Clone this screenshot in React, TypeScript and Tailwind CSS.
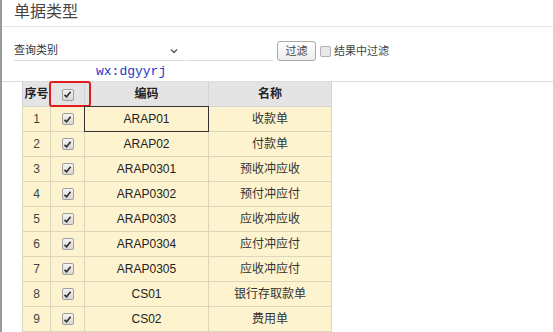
import React from 'react';

const rows = [
  { no: 1, code: 'ARAP01', name: '收款单' },
  { no: 2, code: 'ARAP02', name: '付款单' },
  { no: 3, code: 'ARAP0301', name: '预收冲应收' },
  { no: 4, code: 'ARAP0302', name: '预付冲应付' },
  { no: 5, code: 'ARAP0303', name: '应收冲应收' },
  { no: 6, code: 'ARAP0304', name: '应付冲应付' },
  { no: 7, code: 'ARAP0305', name: '应收冲应付' },
  { no: 8, code: 'CS01', name: '银行存取款单' },
  { no: 9, code: 'CS02', name: '费用单' },
];

function Check() {
  return (
    <span className="inline-flex w-[12px] h-[12px] items-center justify-center rounded-[2px] border border-[#a0a0a0] bg-gradient-to-b from-[#f4f4f4] to-[#d8d8d8] align-middle">
      <svg width="9" height="9" viewBox="0 0 9 9">
        <path d="M1.5 4.8 L3.6 6.8 L7.6 1.8" fill="none" stroke="#333" strokeWidth="1.7" />
      </svg>
    </span>
  );
}

export default function App() {
  return (
    <div
      className="w-[553px] h-[332px] overflow-hidden bg-white border-l-2 border-[#9a9a9a] text-[#333]"
      style={{ fontFamily: '"Liberation Sans", "Noto Sans CJK SC", sans-serif' }}
    >
      <div className="h-[27px] border-b border-[#e6e6e6] pl-[12px] pt-[2px] text-[16px] leading-[20px] text-[#444]">
        单据类型
      </div>

      <div className="flex items-center pl-[12px] mt-[14px] h-[20px]">
        <div className="w-[171px] h-[20px] border-b border-[#dcdcdc] flex items-center justify-between pr-[6px] text-[11px]">
          <span>查询类别</span>
          <svg width="8" height="6" viewBox="0 0 8 6" className="mr-[1px]">
            <path d="M1 1.5 L4 4.5 L7 1.5" fill="none" stroke="#555" strokeWidth="1.3" />
          </svg>
        </div>
        <div className="ml-[2px] w-[86px] h-[20px] border-b border-[#dcdcdc]" />
        <button className="ml-[4px] w-[39px] h-[20px] border border-[#aaa] rounded-[3px] bg-gradient-to-b from-white to-[#ececec] text-[11px] text-[#444] leading-[18px]">
          过滤
        </button>
        <span className="ml-[4px] w-[11px] h-[11px] border border-[#b0b0b0] rounded-[2px] bg-[#e8e8e8]" />
        <span className="ml-[3px] text-[11px] text-[#444]">结果中过滤</span>
      </div>

      <div className="h-[20px] pl-[94px] pt-[4px] text-[13px] leading-[14px] text-[#2238c8]" style={{ fontFamily: '"Liberation Mono", monospace' }}>
        wx:dgyyrj
      </div>

      <div className="border-t border-[#dddddd] pl-[20px]">
        <table className="border-collapse text-[12px] table-fixed">
          <colgroup>
            <col className="w-[28px]" />
            <col className="w-[34px]" />
            <col className="w-[124px]" />
            <col className="w-[123px]" />
          </colgroup>
          <thead>
            <tr className="h-[24px] bg-[#e4e4e4]">
              <th className="border border-t-0 border-[#d4d4d4] font-bold text-[12px] text-[#222]">序号</th>
              <th className="relative border border-t-0 border-[#d4d4d4]">
                <Check />
                <span className="absolute -left-[2px] -top-[1px] w-[42px] h-[26px] border-2 border-[#e01c1c] rounded-[3px]" />
              </th>
              <th className="border border-t-0 border-[#d4d4d4] font-bold text-[12px] text-[#222]">编码</th>
              <th className="border border-t-0 border-[#d4d4d4] font-bold text-[12px] text-[#222]">名称</th>
            </tr>
          </thead>
          <tbody>
            {rows.map((r) => (
              <tr key={r.no} className="h-[25px] bg-[#fdf4cf]">
                <td className="border border-[#dcd6bc] text-center text-[#444]">{r.no}</td>
                <td className="border border-[#dcd6bc] text-center">
                  <Check />
                </td>
                <td className="relative border border-[#dcd6bc] text-center text-[#222]">
                  {r.code}
                  {r.no === 1 && (
                    <span className="absolute -left-[1px] -top-[1px] -right-[1px] -bottom-[1px] border border-[#333]" />
                  )}
                </td>
                <td className="border border-[#dcd6bc] text-center text-[#333]">{r.name}</td>
              </tr>
            ))}
          </tbody>
        </table>
      </div>
    </div>
  );
}
